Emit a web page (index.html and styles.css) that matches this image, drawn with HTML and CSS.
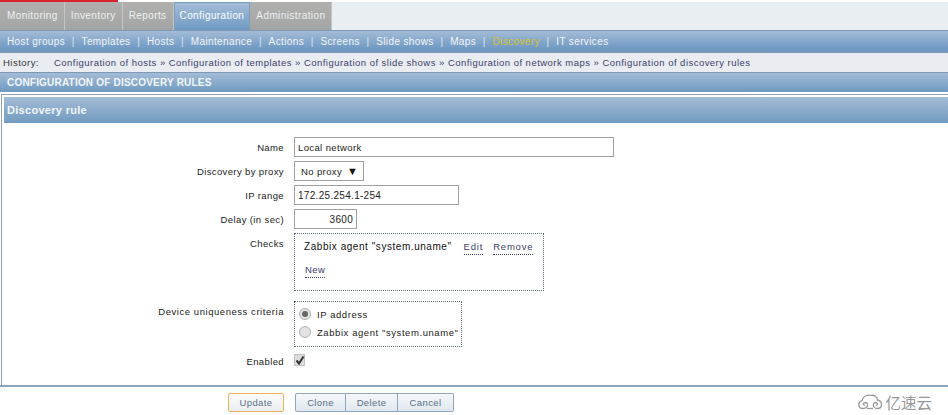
FILE: index.html
```html
<!DOCTYPE html>
<html lang="en">
<head>
	<meta charset="UTF-8">
	<title>Configuration of discovery rules</title>
	<link rel="stylesheet" href="styles.css">
</head>
<body>
	<div class="topline"></div>
	<div class="tabs">
		<a class="tab">Monitoring</a>
		<a class="tab">Inventory</a>
		<a class="tab">Reports</a>
		<a class="tab active">Configuration</a>
		<a class="tab">Administration</a>
	</div>
	<div class="subnav">
		<a>Host groups</a><span class="sep">|</span>
		<a>Templates</a><span class="sep">|</span>
		<a>Hosts</a><span class="sep">|</span>
		<a>Maintenance</a><span class="sep">|</span>
		<a>Actions</a><span class="sep">|</span>
		<a>Screens</a><span class="sep">|</span>
		<a>Slide shows</a><span class="sep">|</span>
		<a>Maps</a><span class="sep">|</span>
		<a class="current">Discovery</a><span class="sep">|</span>
		<a>IT services</a>
	</div>
	<div class="history">
		<span class="history-label">History:</span><a>Configuration of hosts</a> <b>»</b>
		<a>Configuration of templates</a> <b>»</b>
		<a>Configuration of slide shows</a> <b>»</b>
		<a>Configuration of network maps</a> <b>»</b>
		<a>Configuration of discovery rules</a>
	</div>
	<div class="title-bar">CONFIGURATION OF DISCOVERY RULES</div>

	<div class="panel">
		<div class="panel-head">Discovery rule</div>
		<div class="form">
			<label class="row-label">Name</label>
			<div class="field"><input class="text name" type="text" value="Local network"></div>

			<label class="row-label">Discovery by proxy</label>
			<div class="field"><div class="select"><span>No proxy</span><span class="arrow">▼</span></div></div>

			<label class="row-label">IP range</label>
			<div class="field"><input class="text range" type="text" value="172.25.254.1-254"></div>

			<label class="row-label">Delay (in sec)</label>
			<div class="field"><input class="text delay" type="text" value="3600"></div>

			<label class="row-label">Checks</label>
			<div class="field">
				<div class="dotted checks">
					<div class="check-row">
						<span class="check-name">Zabbix agent "system.uname"</span>
						<a class="link">Edit</a>
						<a class="link">Remove</a>
					</div>
					<div class="check-new"><a class="link">New</a></div>
				</div>
			</div>

			<label class="row-label device">Device uniqueness criteria</label>
			<div class="field device">
				<div class="dotted criteria">
					<div class="radio-row"><span class="radio on"></span>IP address</div>
					<div class="radio-row"><span class="radio"></span>Zabbix agent "system.uname"</div>
				</div>
			</div>

			<label class="row-label">Enabled</label>
			<div class="field">
				<span class="checkbox">
					<svg width="12" height="12" viewBox="0 0 12 12"><path d="M2.5 6.5 L5 9.5 L9.5 2.5" fill="none" stroke="#333" stroke-width="2"/></svg>
				</span>
			</div>
		</div>
	</div>

	<div class="footer">
		<button class="btn update">Update</button>
		<div class="btn-group">
			<button class="btn clone">Clone</button>
			<button class="btn delete">Delete</button>
			<button class="btn cancel">Cancel</button>
		</div>
	</div>

	<div class="watermark">
		<svg width="26" height="16" viewBox="0 0 26 16">
			<path d="M6 14.5 C1 14.5 0 8 5 6.5 C6 1.5 11 0.5 13.5 1.5 C17 0.5 20.5 3 20.5 6 C26 7 26 14.5 20 14.5 C17 14.5 16 12 16.5 10 C17 8 20 8 20.5 10 C20.5 11 19.5 11.5 19 11" fill="none" stroke="#999" stroke-width="1.3"/>
			<path d="M6 14.5 C9.5 14.5 11 12 10.5 10 C10 8 7 8 6.5 10 C6.5 11 7.5 11.5 8 11" fill="none" stroke="#999" stroke-width="1.3"/>
			<path d="M10 14.5 H16" fill="none" stroke="#999" stroke-width="1.3"/>
		</svg>
		<span>亿速云</span>
	</div>
</body>
</html>
```

FILE: styles.css
```css
html, body{
	margin: 0;
	padding: 0;
	background: #fff;
}
body{
	position: relative;
	width: 948px;
	height: 415px;
	overflow: hidden;
	font-family: "Liberation Sans", Arial, sans-serif;
	font-size: 9.5px;
	letter-spacing: .38px;
	color: #222;
}
.topline{
	width: 118px;
	height: 2px;
	background: #d9232e;
}
.tabs{
	display: flex;
	height: 28px;
	background: #e9eef2;
}
.tab{
	display: flex;
	align-items: center;
	padding: 0 6px 2px;
	font-size: 10px;
	letter-spacing: .41px;
	color: #eef0f0;
	background: linear-gradient(#b0b0ae, #a3a5a5);
	border-right: 1px solid #c4c6c6;
}
.tab:first-child{
	padding-left: 7px;
}
.tab.active{
	background: linear-gradient(#a3bdd8, #6f9ac4);
	border: 1px solid #7d9cb8;
	border-bottom: 0;
	padding: 0 5px 2px 5px;
	color: #fff;
}
.subnav{
	display: flex;
	align-items: center;
	height: 23px;
	padding: 0 0 1px 7px;
	font-size: 10px;
	letter-spacing: .38px;
	color: #f2f5f8;
	border-top: 1px solid #7f98b4;
	box-sizing: border-box;
	background: linear-gradient(#a3bcd6, #6d97c2 85%, #7e97b5);
}
.subnav .sep{
	width: 16.4px;
	text-align: center;
	color: #dde6ef;
}
.subnav .current{
	color: #d4c22c;
}
.history{
	height: 19px;
	line-height: 19px;
	padding-left: 3px;
	background: #e9edf2;
	color: #3d3d6b;
	letter-spacing: .47px;
	white-space: nowrap;
}
.history b{
	font-weight: normal;
}
.history-label{
	display: inline-block;
	width: 51px;
	color: #333;
}
.title-bar{
	height: 20px;
	line-height: 19px;
	padding-left: 7px;
	box-sizing: border-box;
	border-top: 1px solid #7f98b4;
	background: linear-gradient(#a3bcd6, #6f9ac2);
	color: #f2f5f8;
	font-size: 10px;
	font-weight: bold;
	letter-spacing: .2px;
}
.panel{
	margin-top: 2px;
	margin-left: 1px;
	border-top: 1px solid #8ea3ba;
	border-left: 1px solid #8ea3ba;
	padding: 2px 0 0 2px;
	height: 291px;
	box-sizing: border-box;
}
.panel-head{
	height: 26px;
	line-height: 26px;
	padding-left: 3px;
	background: linear-gradient(#a3bcd6, #719bc0);
	color: #f2f5f8;
	font-size: 11px;
	font-weight: bold;
	letter-spacing: .3px;
}
.form{
	display: grid;
	grid-template-columns: 280px 1fr;
	column-gap: 10px;
	row-gap: 4px;
	padding-top: 14px;
}
.row-label{
	text-align: right;
	height: 20px;
	padding-top: 1px;
	box-sizing: border-box;
	line-height: 20px;
	color: #222;
}
.text{
	display: block;
	height: 20px;
	box-sizing: border-box;
	border: 1px solid #a0a0a0;
	padding: 0 3px;
	margin: 0;
	font: inherit;
	letter-spacing: inherit;
	color: #222;
	background: #fff;
	outline: 0;
}
.name{
	width: 320px;
}
.range{
	width: 165px;
	font-size: 10px;
	letter-spacing: .3px;
}
.delay{
	width: 63px;
	text-align: right;
	font-size: 10px;
	letter-spacing: .3px;
}
.select{
	display: flex;
	align-items: center;
	justify-content: space-between;
	width: 70px;
	height: 20px;
	box-sizing: border-box;
	border: 1px solid #a0a0a0;
	padding: 0 5px 0 6px;
}
.arrow{
	font-size: 11px;
	letter-spacing: 0;
	color: #111;
}
.dotted{
	border: 1px dotted #5d6b80;
	box-sizing: border-box;
}
.checks{
	width: 250px;
	height: 58px;
	padding: 5px 0 0 9px;
}
.check-row{
	display: flex;
	line-height: 16px;
	white-space: nowrap;
}
.check-name{
	color: #111;
	font-size: 10px;
	letter-spacing: .55px;
	margin-right: 12px;
}
.check-row .link{
	margin-right: 10px;
	margin-top: 2px;
	letter-spacing: .8px;
}
.check-new{
	margin-top: 7px;
	padding-left: 1px;
	line-height: 16px;
}
.link{
	color: #3d3d6b;
	border-bottom: 1px dotted #3d3d6b;
	line-height: 12px;
	height: 13px;
	display: inline-block;
}
.row-label.device, .field.device{
	margin-top: 6px;
}
.row-label.device{
	letter-spacing: .55px;
}
.criteria{
	width: 168px;
	height: 46px;
	padding: 3px 0 0 4px;
	white-space: nowrap;
}
.radio-row{
	display: flex;
	align-items: center;
	height: 18px;
	letter-spacing: .57px;
}
.radio{
	width: 12px;
	height: 12px;
	box-sizing: border-box;
	border-radius: 50%;
	border: 1px solid #b0b0b0;
	background: #e2e2e2;
	margin-right: 6px;
	display: flex;
	align-items: center;
	justify-content: center;
}
.radio.on::after{
	content: "";
	width: 6px;
	height: 6px;
	border-radius: 50%;
	background: #666;
}
.checkbox{
	display: block;
	width: 11px;
	height: 12px;
	margin-top: 3px;
	background: #ddd;
	border: 1px solid #c0c0c0;
	box-sizing: border-box;
	line-height: 0;
}
.checkbox svg{
	margin: -1px 0 0 -1px;
}
.footer{
	display: flex;
	height: 29px;
	border-top: 2px solid #8ea3ba;
	box-sizing: border-box;
	padding: 6px 0 0 228px;
}
.btn{
	height: 19px;
	box-sizing: border-box;
	padding: 0;
	font: inherit;
	letter-spacing: inherit;
	color: #5a6f88;
	background: linear-gradient(#f6f8fa, #dfe7ef);
	border: 1px solid #8fa6bd;
	border-radius: 2px;
}
.btn.update{
	width: 56px;
	margin-right: 11px;
	border-color: #e6b45a;
	background: linear-gradient(#fdfdfb, #e9eef2);
}
.btn-group{
	display: flex;
}
.btn-group .btn{
	border-radius: 0;
}
.btn-group .btn + .btn{
	border-left: 0;
}
.btn.clone{
	width: 51px;
	border-radius: 2px 0 0 2px;
}
.btn.delete{
	width: 52px;
}
.btn.cancel{
	width: 56px;
	border-radius: 0 2px 2px 0;
}
.watermark{
	position: absolute;
	right: 16px;
	bottom: 4px;
	display: flex;
	align-items: center;
	gap: 2px;
	color: #999;
	font-family: "Noto Sans CJK SC", sans-serif;
	font-size: 15.5px;
	letter-spacing: 0;
	line-height: 18px;
}
```
